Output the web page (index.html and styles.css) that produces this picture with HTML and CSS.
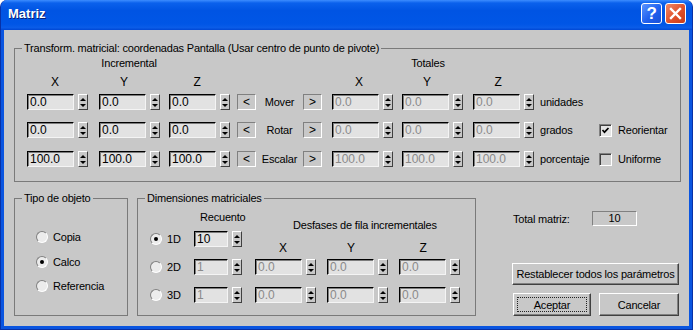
FILE: index.html
```html
<!DOCTYPE html>
<html lang="es">
<head>
    <meta charset="UTF-8">
    <title>Matriz</title>
    <link rel="stylesheet" href="styles.css">
</head>
<body>

<div class="window">
    <div class="titlebar">
        <span class="title">Matriz</span>
        <div class="caption-buttons">
            <span class="cap-btn help">?</span>
            <span class="cap-btn close">
                <svg width="19" height="19" viewBox="0 0 19 19"><path d="M5 5 L14 14 M14 5 L5 14" stroke="#fff" stroke-width="2.4" stroke-linecap="square"/></svg>
            </span>
        </div>
    </div>

    <div class="client">
        <fieldset class="group">
            <legend>Transform. matricial: coordenadas Pantalla (Usar centro de punto de pivote)</legend>
            <div class="gbody transform">
                <div class="heads">
                    <span class="head-incr">Incremental</span>
                    <span class="head-tot">Totales</span>
                </div>
                <div class="axes top-axes">
                    <span>X</span><span>Y</span><span>Z</span><span>X</span><span>Y</span><span>Z</span>
                </div>

                <div class="trow">
                    <span class="spin"><span class="field">0.0</span><span class="arrows"></span></span>
                    <span class="spin"><span class="field">0.0</span><span class="arrows"></span></span>
                    <span class="spin"><span class="field">0.0</span><span class="arrows"></span></span>
                    <span class="nudge">&lt;</span>
                    <span class="op">Mover</span>
                    <span class="nudge">&gt;</span>
                    <span class="spin"><span class="field off">0.0</span><span class="arrows"></span></span>
                    <span class="spin"><span class="field off">0.0</span><span class="arrows"></span></span>
                    <span class="spin"><span class="field off">0.0</span><span class="arrows"></span></span>
                    <span class="unit">unidades</span>
                </div>

                <div class="trow">
                    <span class="spin"><span class="field">0.0</span><span class="arrows"></span></span>
                    <span class="spin"><span class="field">0.0</span><span class="arrows"></span></span>
                    <span class="spin"><span class="field">0.0</span><span class="arrows"></span></span>
                    <span class="nudge">&lt;</span>
                    <span class="op">Rotar</span>
                    <span class="nudge">&gt;</span>
                    <span class="spin"><span class="field off">0.0</span><span class="arrows"></span></span>
                    <span class="spin"><span class="field off">0.0</span><span class="arrows"></span></span>
                    <span class="spin"><span class="field off">0.0</span><span class="arrows"></span></span>
                    <span class="unit">grados</span>
                    <span class="checkline">
                        <span class="check on">
                            <svg width="9" height="9" viewBox="0 0 9 9"><path d="M1.5 4 L3.5 6.2 L7.5 2" fill="none" stroke="#000" stroke-width="1.7"/></svg>
                        </span>
                        Reorientar
                    </span>
                </div>

                <div class="trow">
                    <span class="spin"><span class="field">100.0</span><span class="arrows"></span></span>
                    <span class="spin"><span class="field">100.0</span><span class="arrows"></span></span>
                    <span class="spin"><span class="field">100.0</span><span class="arrows"></span></span>
                    <span class="nudge">&lt;</span>
                    <span class="op">Escalar</span>
                    <span class="nudge">&gt;</span>
                    <span class="spin"><span class="field off">100.0</span><span class="arrows"></span></span>
                    <span class="spin"><span class="field off">100.0</span><span class="arrows"></span></span>
                    <span class="spin"><span class="field off">100.0</span><span class="arrows"></span></span>
                    <span class="unit">porcentaje</span>
                    <span class="checkline">
                        <span class="check"></span>
                        Uniforme
                    </span>
                </div>
            </div>
        </fieldset>

        <div class="lower">
            <fieldset class="group tipo">
                <legend>Tipo de objeto</legend>
                <div class="gbody radios">
                    <span class="radioline"><span class="radio"></span>Copia</span>
                    <span class="radioline"><span class="radio on"></span>Calco</span>
                    <span class="radioline"><span class="radio"></span>Referencia</span>
                </div>
            </fieldset>

            <fieldset class="group dims">
                <legend>Dimensiones matriciales</legend>
                <div class="gbody dims-body">
                    <div class="count-col">
                        <span class="count-head">Recuento</span>
                        <div class="drow">
                            <span class="radio on"></span>
                            <span class="dim">1D</span>
                            <span class="spin"><span class="field count">10</span><span class="arrows"></span></span>
                        </div>
                        <div class="drow">
                            <span class="radio"></span>
                            <span class="dim">2D</span>
                            <span class="spin"><span class="field count off">1</span><span class="arrows"></span></span>
                        </div>
                        <div class="drow">
                            <span class="radio"></span>
                            <span class="dim">3D</span>
                            <span class="spin"><span class="field count off">1</span><span class="arrows"></span></span>
                        </div>
                    </div>
                    <div class="offset-col">
                        <span class="offset-head">Desfases de fila incrementales</span>
                        <div class="axes low-axes">
                            <span>X</span><span>Y</span><span>Z</span>
                        </div>
                        <div class="orow">
                            <span class="spin"><span class="field off">0.0</span><span class="arrows"></span></span>
                            <span class="spin"><span class="field off">0.0</span><span class="arrows"></span></span>
                            <span class="spin"><span class="field off">0.0</span><span class="arrows"></span></span>
                        </div>
                        <div class="orow">
                            <span class="spin"><span class="field off">0.0</span><span class="arrows"></span></span>
                            <span class="spin"><span class="field off">0.0</span><span class="arrows"></span></span>
                            <span class="spin"><span class="field off">0.0</span><span class="arrows"></span></span>
                        </div>
                    </div>
                </div>
            </fieldset>

            <div class="side">
                <div class="total-row">
                    <span class="total-label">Total matriz:</span>
                    <span class="total">10</span>
                </div>
                <div class="btn reset">Restablecer todos los parámetros</div>
                <div class="btn-row">
                    <div class="btn ok"><span class="focus">Aceptar</span></div>
                    <div class="btn cancel">Cancelar</div>
                </div>
            </div>
        </div>
    </div>
</div>

</body>
</html>
```

FILE: styles.css
```css
* {
    box-sizing: border-box;
}
body {
    margin: 0;
    font-family: "Liberation Sans", Arial, sans-serif;
    font-size: 11px;
    letter-spacing: -0.2px;
    color: #000;
    background: #fff;
}
.window {
    width: 693px;
    height: 330px;
    display: flex;
    flex-direction: column;
    background: #0a55e0;
    border: 1px solid #0831a6;
    border-top: 0;
    border-radius: 7px 7px 0 0;
    overflow: hidden;
}
.titlebar {
    height: 30px;
    flex: none;
    display: flex;
    align-items: flex-start;
    justify-content: space-between;
    padding: 3px 6px 0 7px;
    background: linear-gradient(#3d8dff 0%, #0b61ec 10%, #0054e3 35%, #0056e6 80%, #0a5ce8 92%, #0047d4 100%);
}
.title {
    color: #fff;
    font-weight: bold;
    font-size: 13px;
    letter-spacing: 0;
    line-height: 22px;
    text-shadow: 1px 1px 0 #0a1f72;
}
.caption-buttons {
    display: flex;
    gap: 3px;
}
.cap-btn {
    width: 21px;
    height: 21px;
    border: 1px solid #fff;
    border-radius: 3px;
    display: flex;
    align-items: center;
    justify-content: center;
    color: #fff;
}
.help {
    background: linear-gradient(135deg, #5a95ff, #2060ee 55%, #1a4fd6);
    font-weight: bold;
    font-size: 17px;
}
.close {
    background: linear-gradient(135deg, #f08a68, #e0502a 55%, #c83c18);
}

.client {
    flex: 1;
    margin: 0 3px 3px 3px;
    background: #c8c8c8;
    padding: 12px 8px 0 10px;
    display: flex;
    flex-direction: column;
}

/* group boxes */
.group {
    margin: 0;
    padding: 0;
    min-width: 0;
    border: 1px solid #7a7a7a;
}
.group legend {
    margin-left: 7px;
    padding: 0 2px;
    line-height: 13px;
}
.transform {
    padding: 2px 0 14px 12px;
}
.heads {
    display: flex;
    height: 13px;
    line-height: 13px;
}
.head-incr {
    width: 204px;
    text-align: center;
}
.head-tot {
    width: 192px;
    margin-left: 101px;
    text-align: center;
}
.axes {
    display: flex;
    height: 13px;
    line-height: 13px;
    font-size: 12px;
}
.axes span {
    width: 20px;
    text-align: center;
}
.top-axes {
    margin-top: 6px;
}
.top-axes span:nth-child(1) { margin-left: 18px; }
.top-axes span:nth-child(2) { margin-left: 49px; }
.top-axes span:nth-child(3) { margin-left: 53px; }
.top-axes span:nth-child(4) { margin-left: 142px; }
.top-axes span:nth-child(5) { margin-left: 48px; }
.top-axes span:nth-child(6) { margin-left: 51px; }

.trow {
    display: flex;
    align-items: center;
    height: 16px;
    margin-top: 12px;
}
.heads + .axes + .trow {
    margin-top: 5px;
}
.trow:last-child {
    margin-top: 13px;
}
.trow .spin:nth-child(2) { margin-left: 11px; }
.trow .spin:nth-child(3) { margin-left: 9px; }
.trow .spin:nth-child(7) { margin-left: 10px; }
.trow .spin:nth-child(8) { margin-left: 9px; }
.trow .spin:nth-child(9) { margin-left: 10px; }

/* spinner fields */
.spin {
    display: flex;
    gap: 4px;
    flex: none;
}
.field {
    width: 47px;
    height: 16px;
    border: 1px solid;
    border-color: #000 #f4f4f4 #f4f4f4 #000;
    box-shadow: inset 1px 1px 0 #7c7c7c;
    background: #e2e2e2;
    font-size: 12px;
    letter-spacing: 0;
    line-height: 14px;
    padding-left: 2px;
    white-space: nowrap;
    overflow: hidden;
}
.field.off {
    color: #8a8a8a;
}
.field.count {
    width: 34px;
}
.arrows {
    width: 10px;
    height: 16px;
    border: 1px solid;
    border-color: #fff #404040 #404040 #fff;
    background: #c8c8c8;
    display: flex;
    flex-direction: column;
    align-items: center;
    justify-content: center;
    gap: 3px;
}
.arrows::before {
    content: "";
    border: 3px solid transparent;
    border-top: 0;
    border-bottom: 3px solid #000;
}
.arrows::after {
    content: "";
    border: 3px solid transparent;
    border-bottom: 0;
    border-top: 3px solid #000;
}

.nudge {
    width: 19px;
    height: 16px;
    flex: none;
    border: 1px solid;
    border-color: #808080 #fff #fff #808080;
    display: flex;
    align-items: center;
    justify-content: center;
    font-size: 12px;
}
.trow .nudge:nth-child(4) {
    margin-left: 7px;
}
.op {
    width: 47px;
    text-align: center;
}
.unit {
    width: 59px;
    margin-left: 6px;
}
.checkline {
    display: flex;
    align-items: center;
    gap: 6px;
}
.check {
    width: 13px;
    height: 13px;
    border: 1px solid;
    border-color: #808080 #fff #fff #808080;
    box-shadow: inset 1px 1px 0 #404040;
    background: #cfcfcf;
    display: flex;
    align-items: center;
    justify-content: center;
}
.check.on {
    background: #e4e4e4;
}

/* lower part */
.lower {
    display: flex;
    height: 124px;
    margin-top: 10px;
}
.tipo {
    width: 114px;
}
.radios {
    display: flex;
    flex-direction: column;
    gap: 8.5px;
    padding: 24px 0 0 21px;
}
.radioline {
    display: flex;
    align-items: center;
    gap: 5px;
    height: 16px;
}
.radio {
    width: 12px;
    height: 12px;
    flex: none;
    border-radius: 50%;
    border: 1px solid;
    border-color: #808080 #fff #fff #808080;
    background: #ececec;
    display: flex;
    align-items: center;
    justify-content: center;
}
.radio.on::after {
    content: "";
    width: 4px;
    height: 4px;
    border-radius: 50%;
    background: #000;
}

.dims {
    width: 339px;
    margin-left: 9px;
}
.dims-body {
    display: flex;
    align-items: flex-start;
    padding: 6px 0 0 12px;
}
.count-col {
    width: 92px;
    flex: none;
    display: flex;
    flex-direction: column;
}
.count-head {
    line-height: 13px;
    padding-left: 50px;
    white-space: nowrap;
}
.drow {
    display: flex;
    align-items: center;
    height: 16px;
    margin-top: 12px;
}
.count-head + .drow {
    margin-top: 7px;
}
.dim {
    width: 32px;
    padding-left: 5px;
}
.offset-col {
    margin-left: 13px;
    padding-top: 7.5px;
    display: flex;
    flex-direction: column;
}
.offset-head {
    line-height: 13px;
    padding-left: 38px;
}
.low-axes {
    margin-top: 10px;
}
.low-axes span:nth-child(1) { margin-left: 18px; }
.low-axes span:nth-child(2) { margin-left: 48px; }
.low-axes span:nth-child(3) { margin-left: 52px; }
.orow {
    display: flex;
    gap: 11px;
    height: 16px;
    margin-top: 12px;
}
.low-axes + .orow {
    margin-top: 4.5px;
}

.side {
    flex: 1;
    display: flex;
    flex-direction: column;
    padding: 19px 2px 0 36px;
}
.total-row {
    display: flex;
    align-items: center;
    height: 16px;
}
.total-label {
    width: 80px;
    padding-left: 1px;
}
.total {
    width: 45px;
    height: 15px;
    border: 1px solid;
    border-color: #808080 #fff #fff #808080;
    text-align: center;
    line-height: 13px;
}
.btn {
    height: 23px;
    border: 1px solid;
    border-color: #fff #404040 #404040 #fff;
    box-shadow: inset -1px -1px 0 #808080;
    background: #c8c8c8;
    display: flex;
    align-items: center;
    justify-content: center;
}
.reset {
    margin-top: 36px;
}
.btn-row {
    display: flex;
    justify-content: space-between;
    margin-top: 8px;
    padding-left: 1px;
}
.ok {
    width: 78px;
    padding: 3px;
    align-items: stretch;
}
.focus {
    flex: 1;
    border: 1px dotted #222;
    display: flex;
    align-items: center;
    justify-content: center;
}
.cancel {
    width: 80px;
}
```
